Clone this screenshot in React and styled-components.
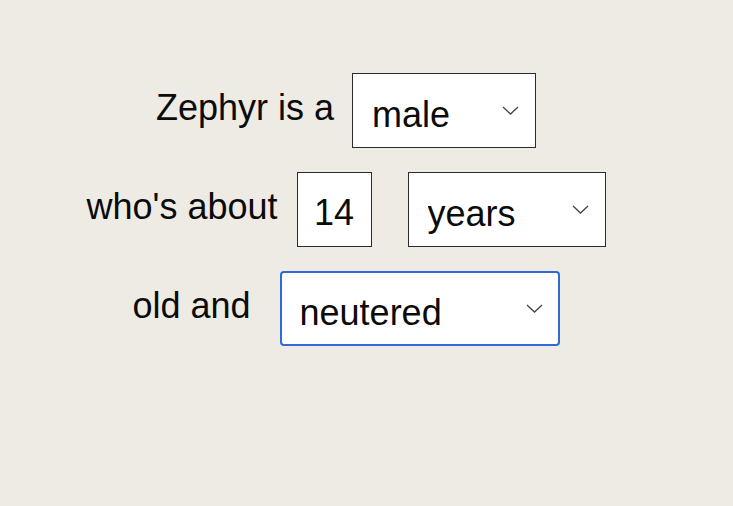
import React from "react";
import styled, { createGlobalStyle } from "styled-components";

const GlobalStyle = createGlobalStyle`
	html, body {
		margin: 0;
		padding: 0;
		background: #eeebe5;
	}

	body {
		font-family: "Liberation Sans", Arial, sans-serif;
		color: #0b0b0b;
	}
`;

const Page = styled.div`
	width: 692px;
	padding-top: 73px;
	display: flex;
	flex-direction: column;
	gap: 24px;
`;

const Row = styled.div`
	display: flex;
	align-items: center;
	justify-content: center;
	height: 75px;
`;

const Label = styled.span`
	font-size: 36px;
	line-height: 41px;
	margin: 0 ${ props => props.gap }px 6px 0;
	white-space: nowrap;
`;

const SelectWrap = styled.div`
	position: relative;
	width: ${ props => props.width }px;
	height: 75px;
	margin-left: ${ props => props.offset || 0 }px;
`;

const Select = styled.select`
	appearance: none;
	box-sizing: border-box;
	width: 100%;
	height: 100%;
	margin: 0;
	padding: 7px 0 0 ${ props => props.focused ? 18 : 19 }px;
	font-family: inherit;
	font-size: 36px;
	color: #0b0b0b;
	background: #fff;
	border: ${ props => props.focused ? "2px solid #2f6ad6" : "1px solid #2b2b2b" };
	border-radius: ${ props => props.focused ? "4px" : "0" };
	outline: none;
`;

const Chevron = styled.svg`
	position: absolute;
	right: 17px;
	top: 50%;
	margin-top: -5px;
	width: 17px;
	height: 9px;
	pointer-events: none;
`;

const NumberInput = styled.input`
	box-sizing: border-box;
	width: 75px;
	height: 75px;
	margin: 0;
	padding: 7px 0 0;
	font-family: inherit;
	font-size: 36px;
	color: #0b0b0b;
	text-align: center;
	background: #fff;
	border: 1px solid #2b2b2b;
	border-radius: 0;
	outline: none;
`;

function Dropdown( { width, offset, value, options, focused } ) {
	return <SelectWrap width={ width } offset={ offset }>
		<Select focused={ focused } defaultValue={ value }>
			{ options.map( o => <option key={ o }>{ o }</option> ) }
		</Select>
		<Chevron viewBox="0 0 17 9">
			<polyline points="1,1 8.5,8 16,1" fill="none" stroke="#444" strokeWidth="1.3" />
		</Chevron>
	</SelectWrap>;
}

export default function App() {
	return <>
		<GlobalStyle />
		<Page>
			<Row>
				<Label gap={ 18 }>Zephyr is a</Label>
				<Dropdown width={ 184 } value="male" options={ [ "male", "female" ] } />
			</Row>
			<Row>
				<Label gap={ 19 }>who's about</Label>
				<NumberInput type="text" defaultValue="14" />
				<Dropdown width={ 198 } offset={ 36 } value="years" options={ [ "years", "months" ] } />
			</Row>
			<Row>
				<Label gap={ 29 }>old and</Label>
				<Dropdown width={ 280 } focused value="neutered" options={ [ "neutered", "not neutered" ] } />
			</Row>
		</Page>
	</>;
}
